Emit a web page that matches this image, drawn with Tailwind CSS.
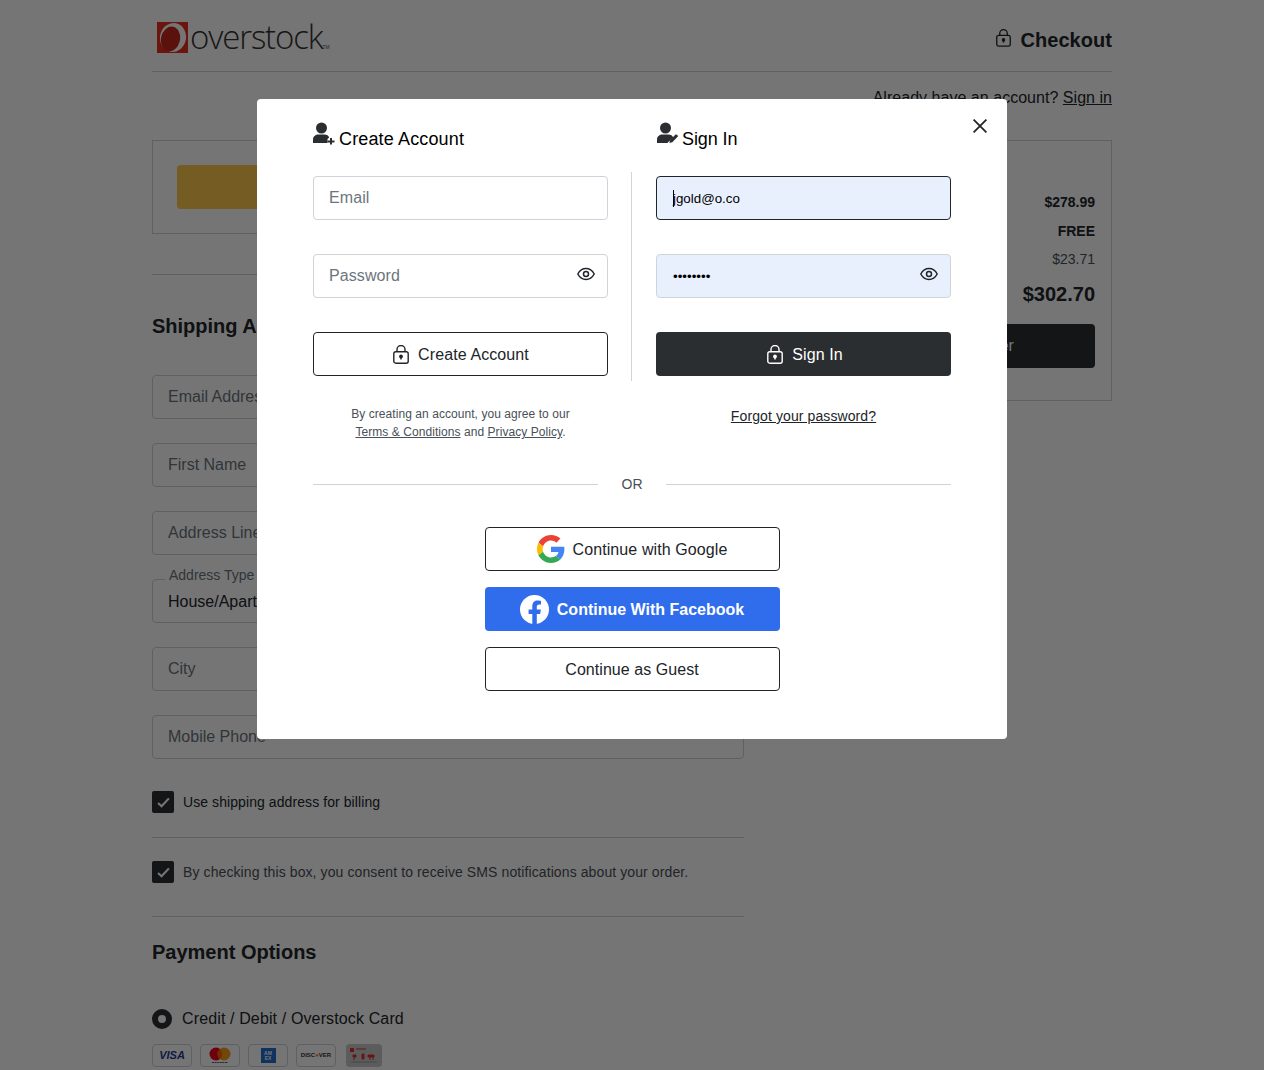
<!DOCTYPE html>
<html lang="en">
<head>
<meta charset="utf-8">
<title>Overstock Checkout</title>
<script src="https://cdn.jsdelivr.net/npm/@tailwindcss/browser@4"></script>
</head>
<body class="bg-white font-['Liberation_Sans',Arial,sans-serif] text-[#212529] h-[1070px] overflow-hidden relative">
<div class="mx-auto w-[960px]">
  <header class="h-[72px] border-b border-[#ced4da] flex items-center justify-between">
    <div class="flex items-center pl-1 pt-[4px]">
      <svg class="w-[32px] h-[31px]" viewBox="0 0 32 31"><rect x="1" width="31" height="31" fill="#e8301f"/><ellipse cx="17" cy="15.500" rx="13" ry="14.500" fill="#fff" transform="rotate(12 17 15.500)"/><ellipse cx="14.500" cy="17" rx="9.500" ry="12.500" fill="#c9281b" transform="rotate(12 14.500 17)"/><path d="M1 0h10L1 9z" fill="#e8301f"/></svg>
      <span class="font-['Open_Sans',sans-serif] font-light text-[33px] leading-none tracking-[-1.150px] ml-[2px] mb-[2px] text-[#333]">overstock</span><span class="text-[5px] self-end mb-1 text-[#555]">TM</span>
    </div>
    <div class="flex items-center gap-[9px] pt-2">
      <svg class="w-[15px] h-[18px] mb-[3px]" viewBox="0 0 16 19" fill="none" stroke="#212529" stroke-width="1.400"><rect x=".8" y="6.700" width="14.400" height="11.500" rx="2"/><path d="M4 6.500V4.500a4 4 0 0 1 8 0v2"/><circle cx="8" cy="11.500" r="1.200" fill="#212529"/><path d="M8 12v2.500"/></svg>
      <span class="text-xl font-bold leading-7 tracking-[0.05px]">Checkout</span>
    </div>
  </header>
  <p class="mt-[14px] text-right text-base leading-6 tracking-[0.03px]">Already have an account? <a class="underline">Sign in</a></p>
  <div class="mt-[30px] grid grid-cols-[592px_328px] gap-10">
    <main>
      <div class="h-[94px] border border-[#ced4da] p-6"><div class="h-[44px] rounded bg-[#fcc84e]"></div></div>
      <div class="mt-10 border-t border-[#ced4da]"></div>
      <h2 class="mt-[37px] text-xl leading-7 font-bold">Shipping Address</h2>
      <div class="mt-[35px] flex flex-col gap-6 text-base text-[#6c757d]">
        <div class="h-11 border border-[#ced4da] rounded flex items-center pl-[15px] pr-4">Email Address</div>
        <div class="h-11 border border-[#ced4da] rounded flex items-center pl-[15px] pr-4">First Name</div>
        <div class="h-11 border border-[#ced4da] rounded flex items-center pl-[15px] pr-4">Address Line 1</div>
        <div class="relative h-11 border border-[#ced4da] rounded flex items-end pl-[15px] pr-4 pb-[8px] text-[#212529]">House/Apartment
          <span class="absolute left-3 -top-[13px] bg-white px-1 text-sm leading-4 text-[#6c757d]">Address Type</span>
        </div>
        <div class="h-11 border border-[#ced4da] rounded flex items-center pl-[15px] pr-4">City</div>
        <div class="h-11 border border-[#ced4da] rounded flex items-center pl-[15px] pr-4">Mobile Phone</div>
      </div>
      <label class="mt-8 flex items-center gap-[9px] text-sm tracking-[0.08px]">
        <span class="w-[22px] h-[22px] rounded-[2px] bg-[#2b2e31] flex items-center justify-center"><svg class="w-[13px] h-[11px]" viewBox="0 0 12 10" fill="none" stroke="#fff" stroke-width="2"><path d="M1 5.500l3.200 3L11 1.200"/></svg></span>
        Use shipping address for billing
      </label>
      <div class="mt-6 border-t border-[#ced4da]"></div>
      <label class="mt-[23px] flex items-center gap-[9px] text-sm text-[#495057] tracking-[0.1px]">
        <span class="w-[22px] h-[22px] rounded-[2px] bg-[#2b2e31] flex items-center justify-center"><svg class="w-[13px] h-[11px]" viewBox="0 0 12 10" fill="none" stroke="#fff" stroke-width="2"><path d="M1 5.500l3.200 3L11 1.200"/></svg></span>
        By checking this box, you consent to receive SMS notifications about your order.
      </label>
      <div class="mt-[33px] border-t border-[#ced4da]"></div>
      <h2 class="mt-[21px] text-xl leading-7 font-bold">Payment Options</h2>
      <label class="mt-[42px] flex items-center gap-[10px] text-base leading-5 tracking-[0.13px]">
        <span class="w-5 h-5 rounded-full border-[6px] border-[#2b2e31] bg-white"></span>
        <span class="pt-px">Credit / Debit / Overstock Card</span>
      </label>
      <div class="mt-[15px] flex gap-2">
        <span class="w-10 h-[23px] border border-[#ced4da] rounded-sm flex items-center justify-center text-[11px] font-bold italic text-[#1a3e8f]">VISA</span>
        <span class="w-10 h-[23px] border border-[#ced4da] rounded-sm flex items-center justify-center"><svg class="w-[22px] h-[17px]" viewBox="0 0 22 17"><circle cx="7" cy="7" r="6.500" fill="#eb001b"/><circle cx="15" cy="7" r="6.500" fill="#f79e1b"/><path d="M11 2a6.500 6.500 0 0 1 0 10 6.500 6.500 0 0 1 0-10z" fill="#ff5f00"/><path d="M3 15.500h16" stroke="#555" stroke-width="1" stroke-dasharray="2 .6"/></svg></span>
        <span class="w-10 h-[23px] border border-[#ced4da] rounded-sm flex items-center justify-center"><span class="w-[15px] h-[15px] bg-[#1f6fd0] text-white text-[5px] leading-[5px] font-bold flex items-center justify-center text-center">AM EX</span></span>
        <span class="w-10 h-[23px] border border-[#ced4da] rounded-sm flex items-center justify-center text-[6px] font-bold text-[#333]">DISC<span class="text-[#f58220]">●</span>VER</span>
        <span class="ml-[2px] w-9 h-[23px] rounded-sm bg-[#c9c9c9] flex items-center justify-center"><svg class="w-[30px] h-[17px]" viewBox="0 0 30 17"><rect x="1" y="1" width="4" height="4" fill="#e8301f"/><path d="M7 2h10" stroke="#c0392b" stroke-width="1"/><path d="M4 8h3v2H4zM13 7h2v5h-2zM19 8h6v2h-6zM5 10v3M24 10v3M21 10v3" stroke="#d6332a" stroke-width="1" fill="#d6332a"/><path d="M2 15h26" stroke="#999" stroke-width="1"/></svg></span>
      </div>
    </main>
    <aside class="h-[261px] border border-[#ced4da] px-4 pt-[50px] text-sm">
      <div class="flex justify-between h-[22px] items-center font-bold"><span>Subtotal</span><span>$278.99</span></div>
      <div class="mt-[7px] flex justify-between h-[22px] items-center font-bold"><span>Shipping</span><span>FREE</span></div>
      <div class="mt-[6px] flex justify-between h-[22px] items-center text-[#495057]"><span>Tax</span><span>$23.71</span></div>
      <div class="mt-[10px] flex justify-between h-7 items-center text-xl font-bold"><span>Total</span><span>$302.70</span></div>
      <div class="mt-4 h-11 rounded bg-[#2b2e31] text-white text-base flex items-center justify-center pl-[10px]">Place Your Order</div>
    </aside>
  </div>
</div>

<div class="absolute inset-0 bg-black/[0.54] flex justify-center items-start pt-[99px]">
  <div class="relative w-[750px] h-[640px] bg-white rounded-sm px-14 pt-5 text-[#212529] tracking-[0.1px]">
    <button class="absolute left-[716px] top-[20px]" aria-label="Close"><svg class="block w-[14px] h-[14px]" viewBox="0 0 14 14" stroke="#212529" stroke-width="1.800" fill="none"><path d="M.6.6l12.800 12.800M13.400.6L.6 13.400"/></svg></button>
    <div class="grid grid-cols-[295px_48px_295px]">
      <section>
        <h2 class="h-[38px] flex items-center text-lg font-normal text-black tracking-[0.14px] pt-[2px]">
          <svg class="w-[22px] h-[24px] mb-[10px] mr-1 shrink-0" viewBox="0 0 22 24" fill="#2b2e31"><circle cx="8.500" cy="6" r="5.500"/><path d="M0 21v-3.500c0-3 2.500-5 5.500-5h6c2.300 0 4 1.200 4.700 3l-1.700 1.500V21z"/><path d="M17 17.500h2v2.500h2.500v2H19v2h-2v-2h-2.500v-2H17z" transform="translate(0 -1.500)"/></svg>
          Create Account
        </h2>
        <div class="mt-[19px] h-11 border border-[#ced4da] rounded flex items-center pl-[15px] pr-4 text-base text-[#6c757d]">Email</div>
        <div class="mt-[34px] h-11 border border-[#ced4da] rounded flex items-center justify-between pl-[15px] pr-3 text-base text-[#6c757d]">Password
          <svg class="w-[18px] h-[14px] mb-1" viewBox="0 0 18 14" fill="none" stroke="#212529" stroke-width="1.500"><path d="M.8 7C2.800 3.300 5.700 1.500 9 1.500S15.200 3.300 17.200 7C15.200 10.700 12.300 12.500 9 12.500S2.800 10.700.8 7z"/><circle cx="9" cy="7" r="2.500"/></svg>
        </div>
        <button class="mt-[34px] w-full h-11 border border-[#212529] rounded flex items-center justify-center gap-[9px] pl-[1px] text-base">
          <svg class="w-4 h-[19px]" viewBox="0 0 16 19" fill="none" stroke="#212529" stroke-width="1.400"><rect x=".8" y="6.700" width="14.400" height="11.500" rx="2"/><path d="M4 6.500V4.500a4 4 0 0 1 8 0v2"/><circle cx="8" cy="11.500" r="1.200" fill="#212529"/><path d="M8 12v2.500"/></svg>
          <span class="pt-[2px]">Create Account</span>
        </button>
        <p class="mt-[29px] text-center text-xs leading-[18px] text-[#495057] tracking-[0.06px]">By creating an account, you agree to our<br><a class="underline">Terms &amp; Conditions</a> and <a class="underline">Privacy Policy</a>.</p>
      </section>
      <div class="flex justify-start pl-[23px] pt-[53px]"><div class="w-px h-[209px] bg-[#ced4da]"></div></div>
      <section>
        <h2 class="h-[38px] flex items-center text-lg font-normal text-black pt-[2px] tracking-[-0.1px]">
          <svg class="w-[22px] h-[24px] mb-[10px] mr-[3px] ml-px shrink-0" viewBox="0 0 22 24" fill="#2b2e31"><circle cx="8.500" cy="6" r="5.500"/><path d="M0 21v-3.500c0-3 2.500-5 5.500-5h6c2.300 0 4 1.200 4.700 3L11 20.300 10.500 21z"/><path d="M17.800 15.200l2.500 1.800-6 6.300-3 .7.700-2.800z" transform="translate(1 -3)"/></svg>
          Sign In
        </h2>
        <div class="relative mt-[19px] h-11 border border-[#212529] rounded flex items-center px-4 pt-[2px] bg-[#e8f0fe] text-[13.330px] text-black tracking-normal">jgold@o.co<span class="absolute left-4 top-[13px] w-px h-[17px] bg-black"></span></div>
        <div class="mt-[34px] h-11 border border-[#ced4da] rounded flex items-center justify-between pl-4 pr-3 bg-[#e8f0fe] text-[13.330px] text-black tracking-normal"><span class="pt-px">••••••••</span>
          <svg class="w-[18px] h-[14px] mb-1" viewBox="0 0 18 14" fill="none" stroke="#212529" stroke-width="1.500"><path d="M.8 7C2.800 3.300 5.700 1.500 9 1.500S15.200 3.300 17.200 7C15.200 10.700 12.300 12.500 9 12.500S2.800 10.700.8 7z"/><circle cx="9" cy="7" r="2.500"/></svg>
        </div>
        <button class="mt-[34px] w-full h-11 rounded bg-[#2b2e31] text-white flex items-center justify-center gap-[9px] pl-[3px] text-base">
          <svg class="w-4 h-[19px]" viewBox="0 0 16 19" fill="none" stroke="#fff" stroke-width="1.400"><rect x=".8" y="6.700" width="14.400" height="11.500" rx="2"/><path d="M4 6.500V4.500a4 4 0 0 1 8 0v2"/><circle cx="8" cy="11.500" r="1.200" fill="#fff"/><path d="M8 12v2.500"/></svg>
          <span class="pt-[2px]">Sign In</span>
        </button>
        <p class="mt-[30px] text-center text-sm leading-5 tracking-[0.1px]"><a class="underline">Forgot your password?</a></p>
      </section>
    </div>
    <div class="mt-[33px] h-5 flex items-center text-sm text-[#495057]">
      <div class="w-[285px] border-t border-[#ced4da]"></div>
      <span class="w-[68px] text-center tracking-normal">OR</span>
      <div class="flex-1 border-t border-[#ced4da]"></div>
    </div>
    <div class="mt-[33px] w-[295px] mx-auto flex flex-col gap-4 text-base">
      <button class="h-11 border border-[#212529] rounded flex items-center justify-center gap-2">
        <svg class="w-[28px] h-[28px]" viewBox="0 0 48 48"><path fill="#ea4335" d="M24 9.500c3.500 0 6.700 1.200 9.200 3.600l6.900-6.900C35.900 2.400 30.500 0 24 0 14.600 0 6.500 5.400 2.600 13.200l8 6.200C12.400 13.700 17.700 9.500 24 9.500z"/><path fill="#4285f4" d="M47 24.500c0-1.600-.2-3.100-.4-4.500H24v9h12.900c-.6 3-2.300 5.500-4.800 7.200l7.700 6c4.500-4.200 7.200-10.300 7.200-17.700z"/><path fill="#fbbc05" d="M10.500 28.600c-.5-1.400-.8-3-.8-4.600s.3-3.200.8-4.600l-8-6.200C.9 16.500 0 20.100 0 24s.9 7.500 2.600 10.800l7.900-6.200z"/><path fill="#34a853" d="M24 48c6.500 0 11.900-2.100 15.900-5.800l-7.700-6c-2.200 1.400-4.900 2.300-8.200 2.300-6.300 0-11.600-4.200-13.500-9.900l-8 6.200C6.500 42.600 14.600 48 24 48z"/></svg>
        <span class="pt-[2px]">Continue with Google</span>
      </button>
      <button class="h-11 rounded bg-[#2f6ded] text-white font-bold flex items-center justify-center gap-2 tracking-normal">
        <svg class="w-[29px] h-[29px]" viewBox="0 0 29 29"><circle cx="14.500" cy="14.500" r="14.500" fill="#fff"/><path fill="#2f6ded" d="M12.300 29v-10H8.600v-4.500h3.700v-3.200c0-3.700 2.200-5.700 5.500-5.700 1.600 0 3.200.3 3.200.3v3.600h-1.800c-1.800 0-2.400 1.100-2.400 2.300v2.700h4l-.6 4.500h-3.400v10a14.500 14.500 0 0 1-4.500 0z"/></svg>
        <span class="pt-[2px]">Continue With Facebook</span>
      </button>
      <button class="h-11 border border-[#212529] rounded flex items-center justify-center tracking-[0.05px]"><span class="pt-[2px]">Continue as Guest</span></button>
    </div>
  </div>
</div>
</body>
</html>
